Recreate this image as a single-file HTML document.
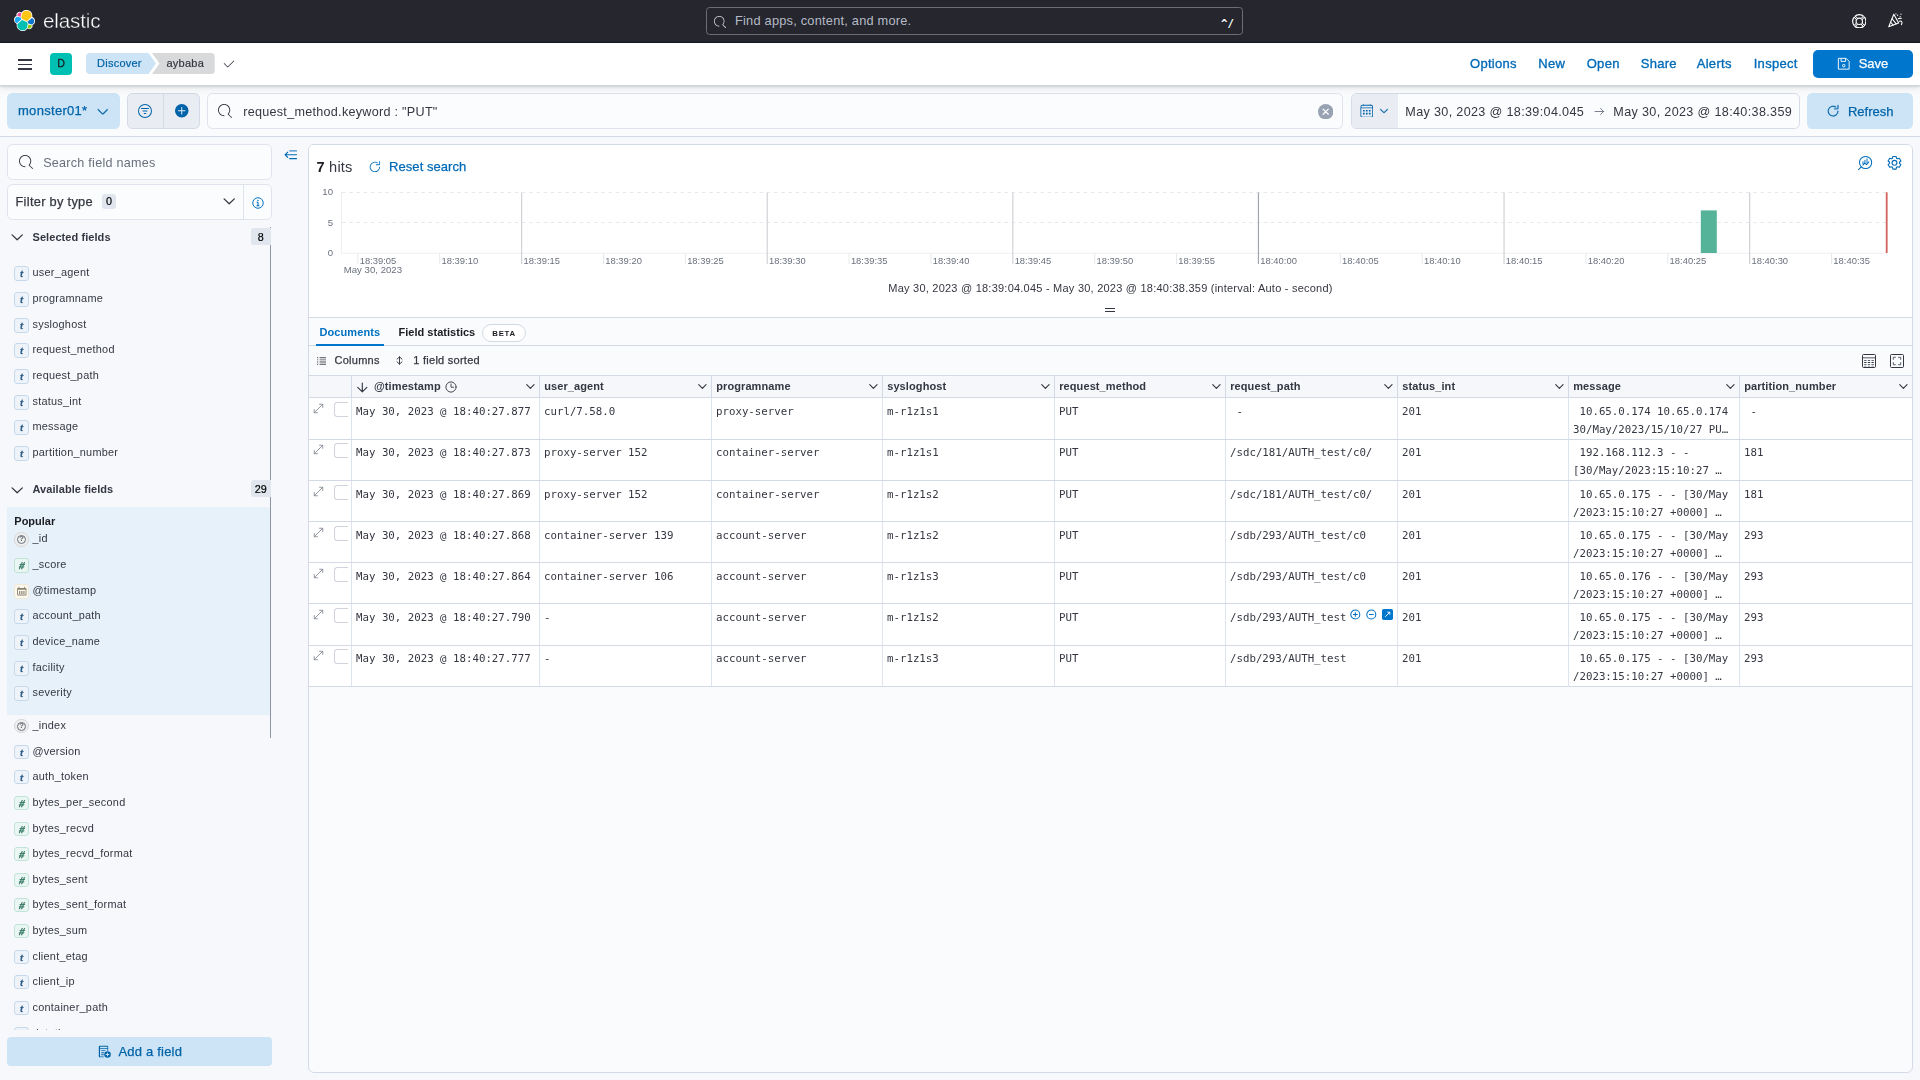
<!DOCTYPE html>
<html lang="en">
<head>
<meta charset="utf-8">
<title>Discover - aybaba - Elastic</title>
<style>
*{box-sizing:border-box;margin:0;padding:0}
html,body{width:1920px;height:1080px;overflow:hidden}
body{background:#f7f8fc;font-family:"Liberation Sans",sans-serif;color:#343741;font-size:12.6px;position:relative}
svg{display:block}
.abs{position:absolute}
/* ---------- top dark header ---------- */
#h1{position:absolute;left:0;top:0;width:1920px;height:43px;background:#25262e;box-shadow:inset 0 -1px 0 #171923}
#h1 .logo{position:absolute;left:14px;top:10px;width:21px;height:21px}
#h1 .word{position:absolute;left:42.8px;top:6.800px;font-size:20.6px;line-height:28px;color:#fff;letter-spacing:-0.15px;-webkit-text-stroke:.35px #25262e;will-change:transform}
#h1 .search{position:absolute;left:706px;top:7px;width:537px;height:28px;border:1px solid #6b6e78;border-radius:3.5px}
#h1 .search svg{position:absolute;left:7px;top:7.5px;width:12px;height:12px;fill:#d4d7de}
#h1 .search .ph{position:absolute;left:28px;top:0;line-height:26px;font-size:12.8px;color:#b5bbc7;letter-spacing:.22px}
#h1 .search .kb{position:absolute;right:8.300px;top:0;line-height:31px;font-size:10.8px;color:#fff;font-family:"DejaVu Sans Mono","Liberation Mono",monospace;font-weight:bold;letter-spacing:-.2px}
#h1 .ic{position:absolute;top:13.5px;width:15px;height:15px}
/* ---------- second header ---------- */
#h2{position:absolute;left:0;top:43px;width:1920px;height:42px;background:#fff;box-shadow:0 1px 0 #cfd3e0,0 1.500px 2.500px rgba(0,0,0,.13),0 3px 8px rgba(0,0,0,.09);z-index:5}
#h2 .burger{position:absolute;left:18px;top:16px;width:14px;height:12px}
#h2 .burger i{position:absolute;left:0;width:14px;height:1.600px;background:#343741}
#h2 .avatar{position:absolute;left:50px;top:10px;width:22px;height:22px;border-radius:4px;background:#00bfb3;color:#1a1c21;font-size:10.600px;-webkit-text-stroke:.3px #1a1c21;text-align:center;line-height:21.500px}
#h2 .bc1{position:absolute;left:86px;top:10px;height:21px;width:70px;background:#cce4f5;border-radius:4px 0 0 4px;clip-path:polygon(0 0,62.5px 0,70px 50%,62.5px 100%,0 100%)}
#h2 .bc1 span{position:absolute;left:11px;top:0;line-height:20px;font-size:11px;color:#0063a9;letter-spacing:.25px;-webkit-text-stroke:.2px #0063a9}
#h2 .bc2{position:absolute;left:152px;top:10px;height:21px;width:62.7px;background:#d8d9db;border-radius:0 4px 4px 0;clip-path:polygon(0 0,100% 0,100% 100%,0 100%,7.5px 50%)}
#h2 .bc2 span{position:absolute;left:14.5px;top:0;line-height:20px;font-size:11px;color:#343741;letter-spacing:.25px;-webkit-text-stroke:.2px #343741}
#h2 .chk{position:absolute;left:222px;top:14px;width:14px;height:14px;fill:#343741}
#h2 .lnk{position:absolute;top:0;line-height:42px;font-size:13px;color:#006bb8;letter-spacing:.3px;-webkit-text-stroke:.35px #006bb8}
#h2 .save{position:absolute;left:1813px;top:7px;width:100px;height:28px;border-radius:5px;background:#0077cc;color:#fff}
#h2 .save svg{position:absolute;left:24px;top:7.300px;width:13.500px;height:13.500px}
#h2 .save span{position:absolute;left:45.700px;top:0;line-height:27px;font-size:13px;letter-spacing:-.05px;-webkit-text-stroke:.25px #fff}
/* ---------- query bar ---------- */
#qb{position:absolute;left:0;top:85px;width:1920px;height:52px;background:#fafbfd;border-bottom:1px solid #d3dae6}
.ctl{position:absolute;top:8px;height:35.700px;border-radius:5.4px}
#qb .dv{left:7.2px;top:8px;height:35.700px;width:112.5px;background:#cce4f5;color:#0063a9}
#qb .dv span{position:absolute;left:10.800px;top:0;line-height:36.500px;font-size:13px;letter-spacing:.3px;-webkit-text-stroke:.25px #0063a9}
#qb .dv svg{position:absolute;left:88.500px;top:11.500px;width:13.500px;height:13.500px;fill:#0063a9;stroke:#0063a9;stroke-width:.4px}
#qb .fg{left:127px;width:72.7px;background:#e9edf3;border:1px solid #d4d9e6}
#qb .fg i{position:absolute;left:35.3px;top:0;width:1px;height:34px;background:#d4d9e6}
#qb .fg svg{position:absolute;top:8.800px;width:16px;height:16px;fill:#0063a9}
#qb .qi{left:207.2px;width:1136.300px;background:#fbfcfd;border:1px solid #dfe3ec}
#qb .qi .s{position:absolute;left:10.200px;top:10.200px;width:14px;height:14px;fill:#343741}
#qb .qi span{position:absolute;left:35px;top:0;line-height:36.400px;font-size:12.6px;color:#343741;letter-spacing:.28px}
#qb .qi .x{position:absolute;right:9.200px;top:9.900px;width:15.400px;height:15.400px}
#qb .dp{left:1351px;width:448.5px;background:#fbfcfd;border:1px solid #d6dbea;overflow:hidden}
#qb .dp .pre{position:absolute;left:0;top:0;width:46px;height:34px;background:#e9edf3}
#qb .dp span{position:absolute;top:0;line-height:36.400px;font-size:12.6px;color:#343741;letter-spacing:.34px;white-space:nowrap}
#qb .rf{left:1807px;top:8px;height:35.700px;width:106px;background:#cce4f5;color:#0063a9}
#qb .rf svg{position:absolute;left:19.400px;top:11.300px;width:14.200px;height:14.200px;fill:#0063a9;stroke:#0063a9;stroke-width:.25px}
#qb .rf span{position:absolute;left:41px;top:0;line-height:37.500px;font-size:13px;letter-spacing:-.02px;-webkit-text-stroke:.25px #0063a9}
/* ---------- sidebar ---------- */
#sd{position:absolute;left:0;top:137px;width:300px;height:943px}
#sd .sf{position:absolute;left:7px;top:7px;width:264.500px;height:35.700px;border-radius:5.4px;background:#fbfcfd;border:1px solid #dfe3ec}
#sd .sf svg{position:absolute;left:10.500px;top:10.300px;width:14px;height:14px;fill:#343741}
#sd .sf span{position:absolute;left:35.200px;top:0;line-height:36.400px;font-size:12.6px;color:#69707d;letter-spacing:.25px}
#sd .ft{position:absolute;left:7px;top:47px;width:264.500px;height:35.700px;border-radius:5.4px;background:#fbfcfd;border:1px solid #dfe3ec}
#sd .ft .t{position:absolute;left:7.500px;top:0;line-height:33px;font-size:12.8px;color:#343741;letter-spacing:.3px;font-weight:normal;-webkit-text-stroke:.25px #343741}
#sd .ft .n{position:absolute;left:94px;top:8.700px;width:14px;height:15.5px;border-radius:3px;background:#e0e5ee;font-size:10.8px;line-height:15px;text-align:center;color:#000;-webkit-text-stroke:.2px #000}
#sd .ft .c{position:absolute;left:214px;top:8.700px;width:14.400px;height:14.400px}
#sd .ft i{position:absolute;left:235.300px;top:0;width:1px;height:34px;background:#dfe3ec}
#sd .ft .i{position:absolute;left:244.300px;top:11.800px;width:12px;height:12px}
#sd .col{position:absolute;left:283.500px;top:13px;width:13.500px;height:9.500px}
#sd .sb{position:absolute;left:270px;top:89.5px;width:1px;height:511px;background:#8e96a5}
.sec{position:absolute;left:7.5px;width:263px;height:18px}
.sec svg{position:absolute;left:2.500px;top:2.300px;width:14.400px;height:14.400px}
.sec b{position:absolute;left:25px;top:0;line-height:18px;font-size:11px;color:#343741;letter-spacing:.07px}
.sec u{position:absolute;right:0;top:0;height:17.200px;width:19.500px;border-radius:3px 0 0 3px;background:#e0e5ee;font-size:10.8px;line-height:17.500px;text-align:center;color:#000;text-decoration:none;-webkit-text-stroke:.2px #000;padding-top:.8px}
.fl{position:absolute;left:14.3px;width:250px;list-style:none}
.fl li{height:26px;position:relative;font-size:10.9px;letter-spacing:.25px;color:#343741;line-height:25.650px;padding-left:18.2px;white-space:nowrap}
.tk{position:absolute;left:0;top:6.200px;width:14.5px;height:14.5px;border-radius:3px;border:1px solid;font-size:10px;line-height:13.500px;text-align:center;font-weight:bold;font-style:italic;letter-spacing:0;font-family:"Liberation Sans",sans-serif}
.tk.t{background:#eef3f9;border-color:#c6d8ea;color:#2b5a87;font-size:9.400px;line-height:13px;-webkit-text-stroke:.25px #2b5a87}
.tk.n{background:#eaf6f2;border-color:#bfe3d7;color:#2f7360;font-size:10.5px;line-height:13px;-webkit-text-stroke:.3px #2f7360}
.tk.d{background:#fbf8ef;border-color:#f1e9d6;color:#8b8270}
.tk.n b{display:inline-block;transform:skewX(-13deg);font-size:10px}
.tk.u{background:#efefef;border-color:#d6d6d6;color:#5d646f;border-radius:50%;font-style:normal;font-weight:bold;font-size:7.500px;line-height:12.500px;text-indent:.2px}
.tk.u:after{content:"";box-sizing:border-box;position:absolute;left:1.800px;top:1.800px;width:8.900px;height:8.900px;border:.8px solid #69707d;border-radius:50%}
#sd .pop{position:absolute;left:7px;top:370px;width:263px;height:207.5px;background:#e6f1fa}
#sd .pop b{position:absolute;left:7.3px;top:7px;font-size:11px;line-height:14px;color:#1a1c21;letter-spacing:0}
#sd .add{position:absolute;left:7px;top:900px;width:265px;height:28.5px;border-radius:4px;background:#cce4f5;color:#0063a9}
#sd .add svg{position:absolute;left:91px;top:8px;width:13px;height:13px}
#sd .add span{position:absolute;left:111.5px;top:0;line-height:29px;font-size:13px;letter-spacing:.2px;-webkit-text-stroke:.25px #0063a9}
#sd .fade{position:absolute;left:0;top:893px;width:280px;height:7px;background:#f7f8fc}
/* ---------- main panel ---------- */
#mn{position:absolute;left:308px;top:144px;width:1604.5px;height:928.5px;background:#fafbfd;border:1px solid #d3dae6;border-radius:6px;overflow:hidden}
#mn .top{position:absolute;left:0;top:0;width:1603px;height:172.800px;background:#fff;border-bottom:1px solid #d3dae6}
#mn .hits{position:absolute;left:7.5px;top:12px;font-size:14.6px;line-height:20px;color:#343741;letter-spacing:.2px}
#mn .hits b{color:#1a1c21}
#mn .rs{position:absolute;left:80.100px;top:11.700px;line-height:19px;font-size:13px;color:#006bb8;letter-spacing:.05px;-webkit-text-stroke:.25px #006bb8}
#mn .rsi{position:absolute;left:59.300px;top:15.200px;width:13.800px;height:13.800px;fill:#0071c2}
#mn .tic{position:absolute;top:10.300px;width:15px;height:15px}
#mn .cap{position:absolute;left:0;top:135.800px;width:1603px;text-align:center;font-size:11px;line-height:14px;color:#343741;letter-spacing:.23px}
#mn .rz{position:absolute;left:796px;top:162.600px;width:10px;height:4px;border-top:1.200px solid #343741;border-bottom:1.200px solid #343741}
#mn svg.ch{position:absolute;left:0;top:0;width:1603px;height:172px}
#mn svg.ch text{font-family:"Liberation Sans",sans-serif;font-size:9.4px;fill:#6a717d;letter-spacing:.02px}
#mn .tabs{position:absolute;left:0;top:173.500px;width:1603px;height:27.800px;background:#fafbfd;border-bottom:1px solid #d3dae6}
#mn .tabs .a{position:absolute;left:10.400px;top:-.2px;line-height:28px;font-size:11px;font-weight:bold;color:#0071c2;letter-spacing:.1px}
#mn .tabs .ul{position:absolute;left:6.700px;top:25.500px;width:68px;height:2.200px;background:#0077cc}
#mn .tabs .b{position:absolute;left:89.500px;top:-.2px;line-height:28px;font-size:11px;font-weight:bold;color:#1a1c21;letter-spacing:.02px}
#mn .tabs .beta{position:absolute;left:173.300px;top:5.500px;width:43.500px;height:17.500px;border:1px solid #d3dae6;border-radius:9px;background:#fff;font-size:7.8px;font-weight:bold;letter-spacing:.7px;text-align:center;line-height:17.800px;color:#1a1c21}
#mn .tb{position:absolute;left:0;top:201.300px;width:1603px;height:29.500px;background:#fafbfd}
#mn .tb span{position:absolute;top:0;line-height:28.500px;font-size:11px;color:#343741;letter-spacing:.26px;-webkit-text-stroke:.25px #343741}
#mn .tb svg{position:absolute}
/* grid */
#gr{position:absolute;left:-1px;top:230px;width:1604px;border-top:1px solid #d3dae6}
#gr .hr{position:relative;height:22px;background:#f5f7fb;border-bottom:1px solid #d3dae6}
#gr .hc{position:absolute;top:0;height:21px;border-left:1px solid #d3dae6;font-size:11px;font-weight:bold;color:#343741;line-height:21px;letter-spacing:.1px;padding-left:4.200px}
#gr .hc svg.cv{position:absolute;right:3px;top:5px;width:10.800px;height:10.800px}
#gr .row{position:relative;height:41px;background:#fff;border-bottom:1px solid #d3dae6}
#gr .c{position:absolute;top:0;bottom:0;border-left:1px solid #dfe5ef;font-family:"DejaVu Sans Mono","Liberation Mono",monospace;font-size:10.75px;line-height:18.500px;color:#343741;padding:4.700px 0 0 4px;white-space:pre;overflow:hidden;letter-spacing:-.002px}
#gr .ex{position:absolute;left:4.800px;top:5px;width:11px;height:11px}
#gr .cb{position:absolute;left:25.700px;top:4.200px;width:14.300px;height:14.800px;border:1px solid #cfd3dc;border-right:0;border-radius:3.500px 0 0 3.500px;background:#fff}
#gr .up .c{padding-top:3.700px}
#gr .up .ex{top:4px}
#gr .up .cb{top:3.200px}
#h2,#qb,#sd,#mn{will-change:transform}
.l1 li:nth-child(3),.l1 li:nth-child(6){height:25px}
.l2 li:nth-child(3),.l2 li:nth-child(6){height:25px}
.l3 li:nth-child(2),.l3 li:nth-child(5),.l3 li:nth-child(7),.l3 li:nth-child(10){height:25px}
</style>
</head>
<body>
<div id="h1">
<svg class="logo" viewBox="0 0 32 32"><path fill="#FFF" d="M32 16.77a6.334 6.334 0 00-1.14-3.63 6.298 6.298 0 00-3.05-2.3 9.118 9.118 0 00.17-1.73A9.098 9.098 0 0011.49 3.8a4.823 4.823 0 00-7.5 5.49A6.364 6.364 0 00.92 11.6 6.39 6.39 0 000 15.25a6.354 6.354 0 004.21 5.96 8.97 8.97 0 00-.17 1.73 9.088 9.088 0 0016.48 5.29 4.786 4.786 0 002.95 1.02 4.818 4.818 0 004.54-6.45 6.396 6.396 0 003.08-2.31A6.38 6.38 0 0032 16.77"/><path fill="#FEC514" d="M12.58 13.79l7 3.19 7.06-6.19a7.895 7.895 0 00.15-1.57 7.889 7.889 0 00-14.4-4.45l-1.18 6.1 1.37 2.92z"/><path fill="#00BFB3" d="M5.33 21.22a7.954 7.954 0 003.25 8.31 7.943 7.943 0 0011.19-2.1l1.17-6.08-1.56-2.97-7.03-3.2-7.02 6.04z"/><path fill="#F04E98" d="M5.29 9.1l4.8 1.13 1.05-5.45a3.796 3.796 0 00-5.85 4.32"/><path fill="#1BA9F5" d="M4.87 10.24a5.37 5.37 0 00-2.63 1.9 5.352 5.352 0 00-1 3.11 5.312 5.312 0 003.44 4.97l6.73-6.08-1.23-2.64-5.31-1.26z"/><path fill="#93C90E" d="M20.87 27.43a3.76 3.76 0 002.3.79 3.806 3.806 0 003.57-5.08l-4.79-1.12-1.08 5.41z"/><path fill="#0B74CE" d="M21.84 20.75l5.28 1.23a5.37 5.37 0 002.62-1.9 5.34 5.34 0 001.01-3.1 5.306 5.306 0 00-3.45-4.96l-6.9 6.04 1.44 2.69z"/></svg>
<span class="word">elastic</span>
<div class="search"><svg viewBox="0 0 16 16"><path d="M11.271 11.978l3.872 3.873a.502.502 0 00.708 0 .502.502 0 000-.708l-3.565-3.564c2.38-2.747 2.267-6.923-.342-9.532-2.73-2.73-7.17-2.73-9.898 0-2.728 2.729-2.728 7.17 0 9.9a6.955 6.955 0 004.949 2.05.5.5 0 000-1 5.96 5.96 0 01-4.242-1.757 6.01 6.01 0 010-8.486 6.004 6.004 0 018.484 0 6.01 6.01 0 010 8.486.5.5 0 00.034.738z"/></svg><span class="ph">Find apps, content, and more.</span><span class="kb">^/</span></div>
<svg class="ic" style="left:1851.900px;top:13.600px;width:14.600px;height:14.600px" viewBox="0 0 16 16" fill="none" stroke="#fff"><circle cx="8" cy="8" r="7.300" stroke-width="1.300"/><circle cx="8" cy="8" r="3.500" stroke-width="1.300"/><path stroke-width="2.600" d="M2.800 2.800l2.700 2.700M13.200 2.800l-2.700 2.700M2.800 13.200l2.700-2.700M13.200 13.200l-2.700-2.700"/><path stroke="#25262e" stroke-width=".9" d="M2.400 2.400l3.300 3.300M13.600 2.400l-3.300 3.300M2.400 13.600l3.300-3.300M13.600 13.600l-3.300-3.300"/></svg>
<svg class="ic" style="left:1887.800px;top:13.400px;width:14.800px;height:14.800px" viewBox="0 0 16 16" fill="none" stroke="#fff" stroke-width="1.150" stroke-linejoin="round" stroke-linecap="round"><path d="M6.300 1.400L.8 14.900l10.700-4z"/><path d="M4.500 6.200l4.300 5.600M2.900 10l2.600 3.200"/><path d="M12.200 8.900c1.500-.5 2.800.2 2.900 1.400.1.900-.3 1.600-.6 2.300M11.200 6.100l3.300-.4"/><path stroke-width="1.300" d="M10.400 2.400v.1M14 1.200v.1M13.100 3.900v.1M8.600 1v.1"/></svg>
</div>

<div id="h2">
<div class="burger"><i style="top:0"></i><i style="top:4.500px"></i><i style="top:9px"></i></div>
<div class="avatar">D</div>
<div class="bc1"><span>Discover</span></div>
<div class="bc2"><span>aybaba</span></div>
<svg class="chk" viewBox="0 0 16 16"><path d="M6.5 12a.502.502 0 01-.354-.146l-4-4a.502.502 0 01.708-.708L6.5 10.793l6.646-6.647a.502.502 0 01.708.708l-7 7A.502.502 0 016.5 12"/></svg>
<span class="lnk" style="left:1470px">Options</span>
<span class="lnk" style="left:1538.3px">New</span>
<span class="lnk" style="left:1586.7px">Open</span>
<span class="lnk" style="left:1640.7px">Share</span>
<span class="lnk" style="left:1696.7px">Alerts</span>
<span class="lnk" style="left:1753.7px">Inspect</span>
<div class="save"><svg viewBox="0 0 16 16" fill="none" stroke="#fff" stroke-width="1.100" stroke-linejoin="round"><path d="M1.600 1.600h9.300l3.500 3.500v9.300H1.600z"/><path d="M4.800 1.800v3.400h5.400V1.800"/><circle cx="8" cy="10.300" r="1.500"/></svg><span>Save</span></div>
</div>

<div id="qb">
<div class="ctl dv"><span>monster01*</span><svg viewBox="0 0 16 16"><path d="M13.069 5.157L8.384 9.768a.546.546 0 01-.768 0L2.93 5.158a.552.552 0 00-.771 0 .53.53 0 000 .759l4.684 4.61c.641.631 1.672.63 2.312 0l4.684-4.61a.53.53 0 000-.76.552.552 0 00-.771 0z"/></svg></div>
<div class="ctl fg"><i></i>
<svg style="left:9px" viewBox="0 0 16 16"><path d="M8 1a7 7 0 110 14A7 7 0 018 1zm0 1a6 6 0 100 12A6 6 0 008 2zM4.5 5h7a.5.5 0 010 1h-7a.5.5 0 010-1zm1.5 2.5h4a.5.5 0 010 1H6a.5.5 0 010-1zM7.2 10h1.6a.5.5 0 010 1H7.2a.5.5 0 010-1z"/></svg>
<svg style="left:46px;width:15.500px;height:15.500px;top:9px" viewBox="0 0 16 16"><path d="M8 1a7 7 0 110 14A7 7 0 018 1zm0 3a.5.5 0 00-.5.5v3h-3a.5.5 0 000 1h3v3a.5.5 0 001 0v-3h3a.5.5 0 000-1h-3v-3A.5.5 0 008 4z"/></svg>
</div>
<div class="ctl qi"><svg class="s" viewBox="0 0 16 16"><path d="M11.271 11.978l3.872 3.873a.502.502 0 00.708 0 .502.502 0 000-.708l-3.565-3.564c2.38-2.747 2.267-6.923-.342-9.532-2.73-2.73-7.17-2.73-9.898 0-2.728 2.729-2.728 7.17 0 9.9a6.955 6.955 0 004.949 2.05.5.5 0 000-1 5.96 5.96 0 01-4.242-1.757 6.01 6.01 0 010-8.486 6.004 6.004 0 018.484 0 6.01 6.01 0 010 8.486.5.5 0 00.034.738z"/></svg><span>request_method.keyword : "PUT"</span><svg class="x" viewBox="0 0 16 16"><circle cx="8" cy="8" r="8" fill="#98a2b3"/><path d="M5.300 5.300l5.400 5.400M10.700 5.300l-5.400 5.400" stroke="#fff" stroke-width="1.250" stroke-linecap="round"/></svg></div>
<div class="ctl dp"><div class="pre"></div>
<svg class="abs" style="left:7.800px;top:9.700px;width:13.500px;height:13.500px" viewBox="0 0 16 16" fill="#0063a9"><path d="M4 0a.5.5 0 01.5.5V1h7V.5a.5.5 0 011 0V1h.5A2.5 2.5 0 0115.5 3.5v10A2.500 2.500 0 0113 16H3a2.500 2.500 0 01-2.500-2.500v-10A2.500 2.500 0 013 1h.5V.5A.5.5 0 014 0zM1.500 5v8.500A1.500 1.500 0 003 15h10a1.500 1.500 0 001.500-1.500V5h-13zM3 2a1.500 1.500 0 00-1.500 1.500V4h13v-.5A1.500 1.500 0 0013 2H3zm.5 5h2v2h-2V7zm3.500 0h2v2H7V7zm3.500 0h2v2h-2V7zm-7 3.500h2v2h-2v-2zm3.500 0h2v2H7v-2zm3.500 0h2v2h-2v-2z"/></svg>
<svg class="abs" style="left:27px;top:12px;width:10px;height:10px" viewBox="0 0 16 16" fill="#0063a9"><path d="M13.069 5.157L8.384 9.768a.546.546 0 01-.768 0L2.93 5.158a.552.552 0 00-.771 0 .53.53 0 000 .759l4.684 4.61c.641.631 1.672.63 2.312 0l4.684-4.61a.53.53 0 000-.76.552.552 0 00-.771 0z" stroke="#0063a9" stroke-width=".8"/></svg>
<span style="left:53.3px">May 30, 2023 @ 18:39:04.045</span>
<svg class="abs" style="left:241.5px;top:11.5px;width:11px;height:11px" viewBox="0 0 16 16" fill="none" stroke="#69707d" stroke-width="1.3" stroke-linecap="round" stroke-linejoin="round"><path d="M1.5 8h12.5M9.5 3.5L14 8l-4.500 4.500"/></svg>
<span style="left:261.3px">May 30, 2023 @ 18:40:38.359</span>
</div>
<div class="ctl rf"><svg viewBox="0 0 16 16"><path d="M11.228 2.942a.5.5 0 11-.538.842A5 5 0 1013 8a.5.5 0 111 0 6 6 0 11-2.772-5.058zM14 1.5v3A1.5 1.5 0 0112.5 6h-3a.5.5 0 010-1h3a.5.5 0 00.5-.5v-3a.5.5 0 111 0z"/></svg><span>Refresh</span></div>
</div>

<div id="sd">
<div class="sf"><svg viewBox="0 0 16 16"><path d="M11.271 11.978l3.872 3.873a.502.502 0 00.708 0 .502.502 0 000-.708l-3.565-3.564c2.38-2.747 2.267-6.923-.342-9.532-2.73-2.73-7.17-2.73-9.898 0-2.728 2.729-2.728 7.17 0 9.9a6.955 6.955 0 004.949 2.05.5.5 0 000-1 5.96 5.960 0 01-4.242-1.757 6.01 6.01 0 010-8.486 6.004 6.004 0 018.484 0 6.01 6.01 0 010 8.486.5.5 0 00.034.738z"/></svg><span>Search field names</span></div>
<div class="ft"><span class="t">Filter by type</span><span class="n">0</span><svg class="c" viewBox="0 0 16 16"><path d="M2.300 5.400l5.700 5.500 5.700-5.500" fill="none" stroke="#343741" stroke-width="1.450" stroke-linecap="round" stroke-linejoin="round"/></svg><i></i><svg class="i" viewBox="0 0 16 16" fill="none" stroke="#0071c2"><circle cx="8" cy="8" r="7" stroke-width="1.3"/><path stroke-width="1.500" d="M8 7v4.800M6.300 7.200H8M6 11.700h4"/><circle cx="7.900" cy="4.500" r="1" fill="#0071c2" stroke="none"/></svg></div>
<svg class="col" viewBox="0 0 15 11" fill="none" stroke="#006bb8" stroke-width="1.250" stroke-linecap="round" stroke-linejoin="round"><path d="M6.200 1h8" opacity=".75"/><path d="M1 5.500h13.200M6.200 10h8M4 2.500L1 5.500l3 3"/></svg>
<div class="sb"></div>
<div class="sec" style="top:91px"><svg viewBox="0 0 16 16"><path d="M2.300 5.400l5.700 5.500 5.700-5.500" fill="none" stroke="#343741" stroke-width="1.450" stroke-linecap="round" stroke-linejoin="round"/></svg><b>Selected fields</b><u>8</u></div>
<ul class="fl l1" style="top:122.900px"><li><i class="tk t">t</i>user_agent</li><li><i class="tk t">t</i>programname</li><li><i class="tk t">t</i>sysloghost</li><li><i class="tk t">t</i>request_method</li><li><i class="tk t">t</i>request_path</li><li><i class="tk t">t</i>status_int</li><li><i class="tk t">t</i>message</li><li><i class="tk t">t</i>partition_number</li></ul>
<div class="sec" style="top:343.300px"><svg viewBox="0 0 16 16"><path d="M2.300 5.400l5.700 5.500 5.700-5.500" fill="none" stroke="#343741" stroke-width="1.450" stroke-linecap="round" stroke-linejoin="round"/></svg><b>Available fields</b><u>29</u></div>
<div class="pop"><b>Popular</b></div>
<ul class="fl l2" style="top:389.300px"><li><i class="tk u">?</i>_id</li><li><i class="tk n"><b>#</b></i>_score</li><li><i class="tk d"><svg viewBox="0 0 16 16" width="13.600" height="14" preserveAspectRatio="none" style="position:absolute;left:-.7px;top:-1px"><path fill="#8b8270" d="M4.2 3.200h1V4.500h5.600V3.200h1V4.500h.7a1 1 0 011 1v6.500a1 1 0 01-1 1h-9a1 1 0 01-1-1V5.500a1 1 0 011-1h.7V3.200zM3.500 6.500V12h9V6.500h-9zm1.300 1.500h1.400v3.300H4.800zm2.500 0h1.400v3.300H7.300zm2.500 0h1.400v3.300H9.800z"/></svg></i>@timestamp</li><li><i class="tk t">t</i>account_path</li><li><i class="tk t">t</i>device_name</li><li><i class="tk t">t</i>facility</li><li><i class="tk t">t</i>severity</li></ul>
<ul class="fl l3" style="top:575.700px"><li><i class="tk u">?</i>_index</li><li><i class="tk t">t</i>@version</li><li><i class="tk t">t</i>auth_token</li><li><i class="tk n"><b>#</b></i>bytes_per_second</li><li><i class="tk n"><b>#</b></i>bytes_recvd</li><li><i class="tk n"><b>#</b></i>bytes_recvd_format</li><li><i class="tk n"><b>#</b></i>bytes_sent</li><li><i class="tk n"><b>#</b></i>bytes_sent_format</li><li><i class="tk n"><b>#</b></i>bytes_sum</li><li><i class="tk t">t</i>client_etag</li><li><i class="tk t">t</i>client_ip</li><li><i class="tk t">t</i>container_path</li><li><i class="tk t">t</i>datetime</li></ul>
<div class="fade"></div>
<div class="add"><svg viewBox="0 0 16 16" fill="#0063a9"><path d="M2 1h9.500a1 1 0 011 1v5.200h-1V5H2.500v9H7v1H2a1 1 0 01-1-1V2a1 1 0 011-1zm.5 1v2h9V2h-9zM4 6.500h5v1H4v-1zm0 2.500h3.500v1H4V9zm0 2.500h3v1H4v-1z"/><circle cx="11.700" cy="11.700" r="4"/><path d="M11.700 9.500v4.400M9.500 11.700h4.400" stroke="#cce4f5" stroke-width="1.200"/></svg><span>Add a field</span></div>
</div>

<div id="mn">
<div class="top">
<svg class="ch" viewBox="0 0 1603 172"><path d="M33 47.5H1577" stroke="#e7e9ee" stroke-width="1" stroke-dasharray="3.600 3.600"/><path d="M33 77.5H1577" stroke="#e7e9ee" stroke-width="1" stroke-dasharray="3.600 3.600"/><path d="M32.5 47V108.3H1577.5" fill="none" stroke="#eff0f4" stroke-width="1"/><path d="M48.87 108.5V119" stroke="#e6e8ec" stroke-width="1"/><text x="50.67" y="118.5">18:39:05</text><path d="M130.74 108.5V119" stroke="#e6e8ec" stroke-width="1"/><text x="132.54" y="118.5">18:39:10</text><path d="M212.61 47.5V119" stroke="#d0d2d6" stroke-width="1.200"/><text x="214.41" y="118.5">18:39:15</text><path d="M294.47999999999996 108.5V119" stroke="#e6e8ec" stroke-width="1"/><text x="296.28" y="118.5">18:39:20</text><path d="M376.34999999999997 108.5V119" stroke="#e6e8ec" stroke-width="1"/><text x="378.15" y="118.5">18:39:25</text><path d="M458.21999999999997 47.5V119" stroke="#d0d2d6" stroke-width="1.200"/><text x="460.02" y="118.5">18:39:30</text><path d="M540.09 108.5V119" stroke="#e6e8ec" stroke-width="1"/><text x="541.8900000000001" y="118.5">18:39:35</text><path d="M621.9599999999999 108.5V119" stroke="#e6e8ec" stroke-width="1"/><text x="623.76" y="118.5">18:39:40</text><path d="M703.8299999999999 47.5V119" stroke="#d0d2d6" stroke-width="1.200"/><text x="705.63" y="118.5">18:39:45</text><path d="M785.6999999999999 108.5V119" stroke="#e6e8ec" stroke-width="1"/><text x="787.5" y="118.5">18:39:50</text><path d="M867.5699999999999 108.5V119" stroke="#e6e8ec" stroke-width="1"/><text x="869.37" y="118.5">18:39:55</text><path d="M949.4399999999999 47.5V119" stroke="#a2a5ab" stroke-width="1.200"/><text x="951.24" y="118.5">18:40:00</text><path d="M1031.3100000000002 108.5V119" stroke="#e6e8ec" stroke-width="1"/><text x="1033.1100000000001" y="118.5">18:40:05</text><path d="M1113.18 108.5V119" stroke="#e6e8ec" stroke-width="1"/><text x="1114.98" y="118.5">18:40:10</text><path d="M1195.0500000000002 47.5V119" stroke="#d0d2d6" stroke-width="1.200"/><text x="1196.8500000000001" y="118.5">18:40:15</text><path d="M1276.92 108.5V119" stroke="#e6e8ec" stroke-width="1"/><text x="1278.72" y="118.5">18:40:20</text><path d="M1358.7900000000002 108.5V119" stroke="#e6e8ec" stroke-width="1"/><text x="1360.5900000000001" y="118.5">18:40:25</text><path d="M1440.66 47.5V119" stroke="#d0d2d6" stroke-width="1.200"/><text x="1442.46" y="118.5">18:40:30</text><path d="M1522.5300000000002 108.5V119" stroke="#e6e8ec" stroke-width="1"/><text x="1524.3300000000002" y="118.5">18:40:35</text><text x="34.7" y="127.8" style="font-size:9.600px">May 30, 2023</text><text x="24" y="50.1" text-anchor="end" style="font-size:9.600px">10</text><text x="24" y="80.60000000000001" text-anchor="end" style="font-size:9.600px">5</text><text x="24" y="111.10000000000001" text-anchor="end" style="font-size:9.600px">0</text><rect x="1391.8" y="65.4" width="16" height="42.600" fill="#54b399"/><path d="M1577.7 47.2V108" stroke="#d2645c" stroke-width="1.800"/></svg>
<div class="hits"><b>7</b> hits</div>
<svg class="rsi" viewBox="0 0 16 16"><path d="M11.228 2.942a.5.5 0 11-.538.842A5 5 0 1013 8a.5.5 0 111 0 6 6 0 11-2.772-5.058zM14 1.500v3A1.500 1.500 0 0112.500 6h-3a.5.5 0 010-1h3a.5.5 0 00.5-.500v-3a.5.5 0 111 0z"/></svg><span class="rs">Reset search</span>
<svg class="tic" style="left:1548.500px" viewBox="0 0 16 16" fill="none" stroke="#006bb8" stroke-width="1.100" stroke-linecap="round" stroke-linejoin="round"><circle cx="8.100" cy="8" r="6.500"/><path d="M3.500 12.600L.4 15.800"/><path d="M5.200 10.700l1.900-2 1.900 1.500 2.600-2.800"/><path stroke-width="1" d="M5.300 7.200v2.200M7.400 5.600v2.600M9.600 4.100v4.400"/></svg>
<svg class="tic" style="left:1578px" viewBox="0 0 16 16" fill="none" stroke="#006bb8" stroke-width="1.150" stroke-linejoin="round"><path d="M10.16 3.55 L9.73 1.51 L6.27 1.51 L5.84 3.55 L4.88 4.09 L2.86 3.44 L1.14 6.37 L2.73 7.76 L2.73 8.84 L1.14 10.23 L2.86 13.16 L4.88 12.51 L5.84 13.05 L6.27 15.09 L9.73 15.09 L10.16 13.05 L11.12 12.51 L13.14 13.16 L14.86 10.23 L13.27 8.84 L13.27 7.76 L14.86 6.37 L13.14 3.44 L11.12 4.09Z"/><circle cx="8" cy="8.300" r="2.600"/></svg>
<div class="cap">May 30, 2023 @ 18:39:04.045 - May 30, 2023 @ 18:40:38.359 (interval: Auto - second)</div>
<div class="rz"></div>
</div>
<div class="tabs"><span class="a">Documents</span><i class="ul"></i><span class="b">Field statistics</span><span class="beta">BETA</span></div>
<div class="tb"><svg style="left:7.800px;top:10.300px;width:9.200px;height:8px" viewBox="0 0 9.200 8" fill="#4a4e58"><path d="M0 .3h1.200v.9H0zM2.600.3h6.600v.9H2.600zM0 2.450h1.200v.9H0zM2.600 2.450h6.600v.9H2.600zM0 4.600h1.200v.9H0zM2.600 4.600h6.600v.9H2.600zM0 6.750h1.200v.9H0zM2.600 6.750h6.600v.9H2.600z"/></svg><span style="left:25.500px">Columns</span><svg style="left:87.300px;top:10px;width:7px;height:9px" viewBox="0 0 7 9" fill="none" stroke="#343741" stroke-width=".95" stroke-linecap="round" stroke-linejoin="round"><path d="M3.500 1v7M1 3.200L3.500 .8 6 3.200M1 5.800L3.500 8.200 6 5.800"/></svg><span style="left:104.300px">1 field sorted</span><svg style="left:1553px;top:7.700px;width:14px;height:14px" viewBox="0 0 14 14" fill="none"><rect x=".5" y=".5" width="13" height="13" rx="1" stroke="#343741"/><path d="M1 3.700h12" stroke="#8b8e96" stroke-width="1.400"/><path d="M2.200 6.500h9.600M2.200 10.600h9.600" stroke="#5d606a" stroke-width="1" stroke-dasharray="2.300 1.350"/><path d="M2.200 8.550h9.600" stroke="#343741" stroke-width="1.100" stroke-dasharray="2.300 1.350"/><path d="M2.200 12.300h9.600" stroke="#9a9da5" stroke-width=".9" stroke-dasharray="2.300 1.350"/></svg><svg style="left:1581px;top:7.700px;width:14px;height:14px" viewBox="0 0 14 14" fill="none"><rect x=".5" y=".5" width="13" height="13" rx="1" stroke="#343741"/><path d="M3.300 5.800V3.300h2.500M8.200 3.300h2.500v2.500M10.700 8.200v2.500H8.200M5.800 10.700H3.300V8.200" stroke="#5a5e69" stroke-width="1"/></svg></div>
<div id="gr">
<div class="hr"><div class="hc" style="left:43px;width:188px"><svg style="position:absolute;left:4.300px;top:5.300px;width:12.600px;height:12.600px" viewBox="0 0 16 16" fill="none" stroke="#343741" stroke-width="1.450" stroke-linecap="round" stroke-linejoin="round"><path d="M8 2.500v11M2.200 8.200L8 13.800l5.800-5.600"/></svg><span style="position:absolute;left:22px">@timestamp</span><svg style="position:absolute;left:92.500px;top:4.800px;width:12px;height:12px" viewBox="0 0 16 16" fill="none" stroke="#343741" stroke-width="1.200" stroke-linecap="round"><circle cx="8" cy="8" r="6.800"/><path d="M8 4v4.300h3.500"/></svg><svg class="cv" viewBox="0 0 16 16"><path d="M2.600 5.500l5.400 5.300 5.400-5.300" fill="none" stroke="#343741" stroke-width="1.700" stroke-linecap="round" stroke-linejoin="round"/></svg></div><div class="hc" style="left:231px;width:172px">user_agent<svg class="cv" viewBox="0 0 16 16"><path d="M2.600 5.500l5.400 5.300 5.400-5.300" fill="none" stroke="#343741" stroke-width="1.700" stroke-linecap="round" stroke-linejoin="round"/></svg></div><div class="hc" style="left:403px;width:171px">programname<svg class="cv" viewBox="0 0 16 16"><path d="M2.600 5.500l5.400 5.300 5.400-5.300" fill="none" stroke="#343741" stroke-width="1.700" stroke-linecap="round" stroke-linejoin="round"/></svg></div><div class="hc" style="left:574px;width:172px">sysloghost<svg class="cv" viewBox="0 0 16 16"><path d="M2.600 5.500l5.400 5.300 5.400-5.300" fill="none" stroke="#343741" stroke-width="1.700" stroke-linecap="round" stroke-linejoin="round"/></svg></div><div class="hc" style="left:746px;width:171px">request_method<svg class="cv" viewBox="0 0 16 16"><path d="M2.600 5.500l5.400 5.300 5.400-5.300" fill="none" stroke="#343741" stroke-width="1.700" stroke-linecap="round" stroke-linejoin="round"/></svg></div><div class="hc" style="left:917px;width:172px">request_path<svg class="cv" viewBox="0 0 16 16"><path d="M2.600 5.500l5.400 5.300 5.400-5.300" fill="none" stroke="#343741" stroke-width="1.700" stroke-linecap="round" stroke-linejoin="round"/></svg></div><div class="hc" style="left:1089px;width:171px">status_int<svg class="cv" viewBox="0 0 16 16"><path d="M2.600 5.500l5.400 5.300 5.400-5.300" fill="none" stroke="#343741" stroke-width="1.700" stroke-linecap="round" stroke-linejoin="round"/></svg></div><div class="hc" style="left:1260px;width:171px">message<svg class="cv" viewBox="0 0 16 16"><path d="M2.600 5.500l5.400 5.300 5.400-5.300" fill="none" stroke="#343741" stroke-width="1.700" stroke-linecap="round" stroke-linejoin="round"/></svg></div><div class="hc" style="left:1431px;width:173px">partition_number<svg class="cv" viewBox="0 0 16 16"><path d="M2.600 5.500l5.400 5.300 5.400-5.300" fill="none" stroke="#343741" stroke-width="1.700" stroke-linecap="round" stroke-linejoin="round"/></svg></div></div>
<div class="row" style="height:42px"><svg class="ex" viewBox="0 0 16 16" fill="none" stroke="#7a808b" stroke-width="1.150" stroke-linecap="round" stroke-linejoin="round"><path d="M2 14L14 2M9.500 1.800H14.200V6.500M1.800 9.500V14.200H6.500"/></svg><i class="cb"></i><div class="c" style="left:43px;width:188px">May 30, 2023 @ 18:40:27.877</div><div class="c" style="left:231px;width:172px">curl/7.58.0</div><div class="c" style="left:403px;width:171px">proxy-server</div><div class="c" style="left:574px;width:172px">m-r1z1s1</div><div class="c" style="left:746px;width:171px">PUT</div><div class="c" style="left:917px;width:172px"> -</div><div class="c" style="left:1089px;width:171px">201</div><div class="c" style="left:1260px;width:171px"> 10.65.0.174 10.65.0.174
30/May/2023/15/10/27 PU…</div><div class="c" style="left:1431px;width:173px"> -</div></div>
<div class="row up"><svg class="ex" viewBox="0 0 16 16" fill="none" stroke="#7a808b" stroke-width="1.150" stroke-linecap="round" stroke-linejoin="round"><path d="M2 14L14 2M9.500 1.800H14.200V6.500M1.800 9.500V14.200H6.500"/></svg><i class="cb"></i><div class="c" style="left:43px;width:188px">May 30, 2023 @ 18:40:27.873</div><div class="c" style="left:231px;width:172px">proxy-server 152</div><div class="c" style="left:403px;width:171px">container-server</div><div class="c" style="left:574px;width:172px">m-r1z1s1</div><div class="c" style="left:746px;width:171px">PUT</div><div class="c" style="left:917px;width:172px">/sdc/181/AUTH_test/c0/</div><div class="c" style="left:1089px;width:171px">201</div><div class="c" style="left:1260px;width:171px"> 192.168.112.3 - -
[30/May/2023:15:10:27 …</div><div class="c" style="left:1431px;width:173px">181</div></div>
<div class="row"><svg class="ex" viewBox="0 0 16 16" fill="none" stroke="#7a808b" stroke-width="1.150" stroke-linecap="round" stroke-linejoin="round"><path d="M2 14L14 2M9.500 1.800H14.200V6.500M1.800 9.500V14.200H6.500"/></svg><i class="cb"></i><div class="c" style="left:43px;width:188px">May 30, 2023 @ 18:40:27.869</div><div class="c" style="left:231px;width:172px">proxy-server 152</div><div class="c" style="left:403px;width:171px">container-server</div><div class="c" style="left:574px;width:172px">m-r1z1s2</div><div class="c" style="left:746px;width:171px">PUT</div><div class="c" style="left:917px;width:172px">/sdc/181/AUTH_test/c0/</div><div class="c" style="left:1089px;width:171px">201</div><div class="c" style="left:1260px;width:171px"> 10.65.0.175 - - [30/May
/2023:15:10:27 +0000] …</div><div class="c" style="left:1431px;width:173px">181</div></div>
<div class="row"><svg class="ex" viewBox="0 0 16 16" fill="none" stroke="#7a808b" stroke-width="1.150" stroke-linecap="round" stroke-linejoin="round"><path d="M2 14L14 2M9.500 1.800H14.200V6.500M1.800 9.500V14.200H6.500"/></svg><i class="cb"></i><div class="c" style="left:43px;width:188px">May 30, 2023 @ 18:40:27.868</div><div class="c" style="left:231px;width:172px">container-server 139</div><div class="c" style="left:403px;width:171px">account-server</div><div class="c" style="left:574px;width:172px">m-r1z1s2</div><div class="c" style="left:746px;width:171px">PUT</div><div class="c" style="left:917px;width:172px">/sdb/293/AUTH_test/c0</div><div class="c" style="left:1089px;width:171px">201</div><div class="c" style="left:1260px;width:171px"> 10.65.0.175 - - [30/May
/2023:15:10:27 +0000] …</div><div class="c" style="left:1431px;width:173px">293</div></div>
<div class="row"><svg class="ex" viewBox="0 0 16 16" fill="none" stroke="#7a808b" stroke-width="1.150" stroke-linecap="round" stroke-linejoin="round"><path d="M2 14L14 2M9.500 1.800H14.200V6.500M1.800 9.500V14.200H6.500"/></svg><i class="cb"></i><div class="c" style="left:43px;width:188px">May 30, 2023 @ 18:40:27.864</div><div class="c" style="left:231px;width:172px">container-server 106</div><div class="c" style="left:403px;width:171px">account-server</div><div class="c" style="left:574px;width:172px">m-r1z1s3</div><div class="c" style="left:746px;width:171px">PUT</div><div class="c" style="left:917px;width:172px">/sdb/293/AUTH_test/c0</div><div class="c" style="left:1089px;width:171px">201</div><div class="c" style="left:1260px;width:171px"> 10.65.0.176 - - [30/May
/2023:15:10:27 +0000] …</div><div class="c" style="left:1431px;width:173px">293</div></div>
<div class="row" style="height:42px"><svg class="ex" viewBox="0 0 16 16" fill="none" stroke="#7a808b" stroke-width="1.150" stroke-linecap="round" stroke-linejoin="round"><path d="M2 14L14 2M9.500 1.800H14.200V6.500M1.800 9.500V14.200H6.500"/></svg><i class="cb"></i><div class="c" style="left:43px;width:188px">May 30, 2023 @ 18:40:27.790</div><div class="c" style="left:231px;width:172px">-</div><div class="c" style="left:403px;width:171px">account-server</div><div class="c" style="left:574px;width:172px">m-r1z1s2</div><div class="c" style="left:746px;width:171px">PUT</div><div class="c" style="left:917px;width:172px">/sdb/293/AUTH_test<svg style="position:absolute;left:124.300px;top:5.200px;width:37px;height:11px" viewBox="0 0 37 11"><g fill="none" stroke="#0071c2" stroke-width="1.050"><circle cx="5.300" cy="5.500" r="4.500"/><path d="M5.300 3.200v4.600M3 5.500h4.600"/><circle cx="21.300" cy="5.500" r="4.500"/><path d="M19 5.500h4.600"/></g></svg><svg style="position:absolute;left:156.400px;top:5px;width:11px;height:11px" viewBox="0 0 11 11"><rect width="11" height="11" rx="1.800" fill="#0077cc"/><path d="M3.200 7.800L7.800 3.200M5.300 3.200h2.500v2.500" stroke="#fff" stroke-width=".9" fill="none"/></svg></div><div class="c" style="left:1089px;width:171px">201</div><div class="c" style="left:1260px;width:171px"> 10.65.0.175 - - [30/May
/2023:15:10:27 +0000] …</div><div class="c" style="left:1431px;width:173px">293</div></div>
<div class="row up"><svg class="ex" viewBox="0 0 16 16" fill="none" stroke="#7a808b" stroke-width="1.150" stroke-linecap="round" stroke-linejoin="round"><path d="M2 14L14 2M9.500 1.800H14.200V6.500M1.800 9.500V14.200H6.500"/></svg><i class="cb"></i><div class="c" style="left:43px;width:188px">May 30, 2023 @ 18:40:27.777</div><div class="c" style="left:231px;width:172px">-</div><div class="c" style="left:403px;width:171px">account-server</div><div class="c" style="left:574px;width:172px">m-r1z1s3</div><div class="c" style="left:746px;width:171px">PUT</div><div class="c" style="left:917px;width:172px">/sdb/293/AUTH_test</div><div class="c" style="left:1089px;width:171px">201</div><div class="c" style="left:1260px;width:171px"> 10.65.0.175 - - [30/May
/2023:15:10:27 +0000] …</div><div class="c" style="left:1431px;width:173px">293</div></div>
</div>
</div>

</body>
</html>
